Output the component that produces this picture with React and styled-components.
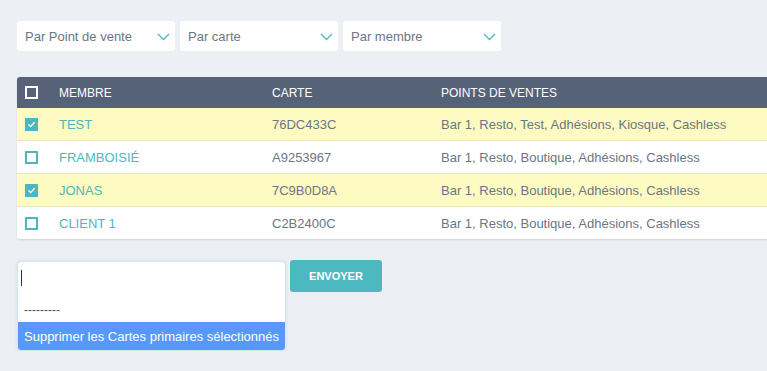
import React, { Fragment } from "react";
import styled, { createGlobalStyle } from "styled-components";

const GlobalStyle = createGlobalStyle`
  html, body {
    margin: 0;
    padding: 0;
    overflow: hidden;
    background: #ecf0f5;
    font-family: "Liberation Sans", Arial, sans-serif;
  }
`;

const Page = styled.div`
  padding: 21px 0 0 17px;
  width: 780px;
`;

// Filter selects

const FilterBar = styled.div`
  display: flex;
  gap: 5px;
`;

const FilterSelect = styled.div`
  width: 158px;
  height: 30px;
  box-sizing: border-box;
  background: #ffffff;
  border-radius: 3px;
  display: flex;
  align-items: center;
  justify-content: space-between;
  padding: 0 5px 0 8px;
  span {
    font-size: 13px;
    color: #6b7685;
  }
  svg {
    margin-top: 1px;
  }
`;

// Table

const Table = styled.div`
  margin-top: 26px;
  background: #ffffff;
  border-radius: 3px 0 0 3px;
  box-shadow: 0 1px 2px rgba(0, 0, 0, 0.12);
  overflow: hidden;
`;

const Row = styled.div`
  display: grid;
  grid-template-columns: 42px 213px 169px 1fr;
  align-items: center;
  height: ${props => (props.head ? "31px" : "32px")};
  background: ${props =>
    props.head ? "#566278" : props.selected ? "#fdfbc2" : "#ffffff"};
  border-top: ${props =>
    props.head ? "none" : props.first ? "none" : "1px solid #ece7b8"};
`;

const Cell = styled.div`
  font-size: ${props => (props.head ? "12px" : "13px")};
  color: ${props =>
    props.head ? "#ffffff" : props.accent ? "#4db6bf" : "#6b7685"};
  text-transform: ${props => (props.head ? "uppercase" : "none")};
  white-space: nowrap;
`;

const CheckCell = styled.div`
  padding-left: 8px;
  display: flex;
  align-items: center;
`;

const Check = styled.span`
  width: 13px;
  height: 13px;
  box-sizing: border-box;
  border: 2px solid ${props => (props.light ? "#ffffff" : "#4db6bf")};
  background: ${props => (props.checked ? "#4db6bf" : "transparent")};
  display: flex;
  align-items: center;
  justify-content: center;
`;

// Bottom action area

const Actions = styled.div`
  margin-top: 21px;
  display: flex;
  align-items: flex-start;
  gap: 4px;
`;

const ActionBox = styled.div`
  margin-top: 1px;
  width: 269px;
  background: #ffffff;
  border: 1px solid #d6e6ea;
  box-sizing: border-box;
  border-radius: 4px;
  box-shadow: 0 0 3px rgba(77, 182, 191, 0.25);
  overflow: hidden;
`;

const SearchField = styled.div`
  height: 40px;
  padding: 8px 0 0 3px;
  box-sizing: border-box;
  span {
    display: block;
    width: 1px;
    height: 16px;
    background: #333;
  }
`;

const Separator = styled.div`
  height: 20px;
  padding-left: 6px;
  font-size: 12px;
  line-height: 16px;
  color: #555;
`;

const Option = styled.div`
  height: 28px;
  display: flex;
  align-items: center;
  padding-left: 6px;
  background: ${props => (props.active ? "#5897fb" : "#ffffff")};
  color: ${props => (props.active ? "#ffffff" : "#555")};
  font-size: 13px;
  white-space: nowrap;
`;

const SendButton = styled.button`
  width: 92px;
  height: 32px;
  border: none;
  border-radius: 3px;
  background: #4cb9c0;
  color: #ffffff;
  font-family: "Liberation Sans", Arial, sans-serif;
  font-size: 11px;
  font-weight: bold;
  padding: 0;
`;

function Chevron() {
  return (
    <svg width="13" height="8" viewBox="0 0 13 8">
      <path d="M1 1 L6.5 6.5 L12 1" fill="none" stroke="#4db6bf" strokeWidth="1.3" />
    </svg>
  );
}

function Tick() {
  return (
    <svg width="9" height="9" viewBox="0 0 9 9">
      <path d="M1.5 4.5 L3.7 6.6 L7.6 2.2" fill="none" stroke="#ffffff" strokeWidth="1.4" />
    </svg>
  );
}

const members = [
  { name: "TEST", card: "76DC433C", pos: "Bar 1, Resto, Test, Adhésions, Kiosque, Cashless", selected: true },
  { name: "FRAMBOISIÉ", card: "A9253967", pos: "Bar 1, Resto, Boutique, Adhésions, Cashless", selected: false },
  { name: "JONAS", card: "7C9B0D8A", pos: "Bar 1, Resto, Boutique, Adhésions, Cashless", selected: true },
  { name: "CLIENT 1", card: "C2B2400C", pos: "Bar 1, Resto, Boutique, Adhésions, Cashless", selected: false }
];

function App() {
  return (
    <Fragment>
      <GlobalStyle />
      <Page>
        <FilterBar>
          {["Par Point de vente", "Par carte", "Par membre"].map(label => (
            <FilterSelect key={label}>
              <span>{label}</span>
              <Chevron />
            </FilterSelect>
          ))}
        </FilterBar>

        <Table>
          <Row head>
            <CheckCell>
              <Check light />
            </CheckCell>
            <Cell head>Membre</Cell>
            <Cell head>Carte</Cell>
            <Cell head>Points de ventes</Cell>
          </Row>
          {members.map((m, i) => (
            <Row key={m.card} selected={m.selected} first={i === 0}>
              <CheckCell>
                <Check checked={m.selected}>{m.selected && <Tick />}</Check>
              </CheckCell>
              <Cell accent>{m.name}</Cell>
              <Cell>{m.card}</Cell>
              <Cell>{m.pos}</Cell>
            </Row>
          ))}
        </Table>

        <Actions>
          <ActionBox>
            <SearchField>
              <span />
            </SearchField>
            <Separator>---------</Separator>
            <Option active>Supprimer les Cartes primaires sélectionnés</Option>
          </ActionBox>
          <SendButton>ENVOYER</SendButton>
        </Actions>
      </Page>
    </Fragment>
  );
}

export default App;
